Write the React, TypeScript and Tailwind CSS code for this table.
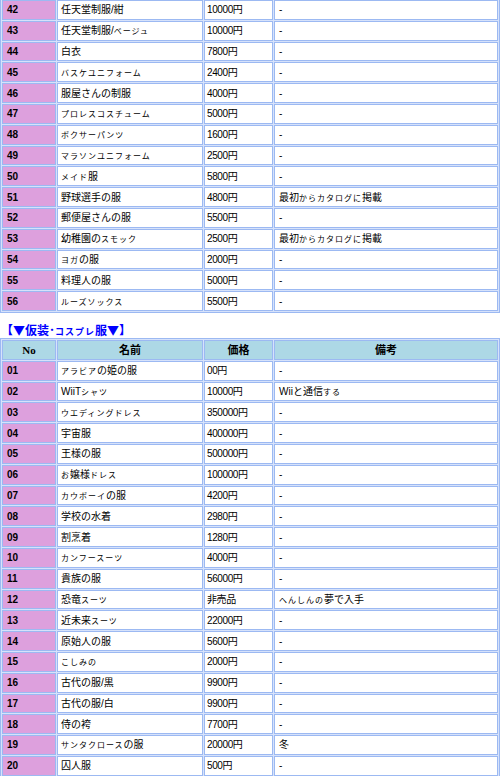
import React from 'react';

type Row = [string, string, string, string];

// 衣装リスト (続き)
const normalClothes: Row[] = [
  ['42', '任天堂制服/紺', '10000円', '-'],
  ['43', '任天堂制服/{ベージュ}', '10000円', '-'],
  ['44', '白衣', '7800円', '-'],
  ['45', '{バスケユニフォーム}', '2400円', '-'],
  ['46', '服屋さんの制服', '4000円', '-'],
  ['47', '{プロレスコスチューム}', '5000円', '-'],
  ['48', '{ボクサーパンツ}', '1600円', '-'],
  ['49', '{マラソンユニフォーム}', '2500円', '-'],
  ['50', '{メイド}服', '5800円', '-'],
  ['51', '野球選手の服', '4800円', '最初{からカタログに}掲載'],
  ['52', '郵便屋さんの服', '5500円', '-'],
  ['53', '幼稚園の{スモック}', '2500円', '最初{からカタログに}掲載'],
  ['54', '{ヨガ}の服', '2000円', '-'],
  ['55', '料理人の服', '5000円', '-'],
  ['56', '{ルーズソックス}', '5500円', '-'],
];

const cosplayClothes: Row[] = [
  ['01', '{アラビア}の姫の服', '00円', '-'],
  ['02', 'WiiT{シャツ}', '10000円', 'Wiiと通信{する}'],
  ['03', '{ウエディングドレス}', '350000円', '-'],
  ['04', '宇宙服', '400000円', '-'],
  ['05', '王様の服', '500000円', '-'],
  ['06', '{お}嬢様{ドレス}', '100000円', '-'],
  ['07', '{カウボーイ}の服', '4200円', '-'],
  ['08', '学校の水着', '2980円', '-'],
  ['09', '割烹着', '1280円', '-'],
  ['10', '{カンフースーツ}', '4000円', '-'],
  ['11', '貴族の服', '56000円', '-'],
  ['12', '恐竜{スーツ}', '非売品', '{へんしんの}夢で入手'],
  ['13', '近未来{スーツ}', '22000円', '-'],
  ['14', '原始人の服', '5600円', '-'],
  ['15', '{こしみの}', '2000円', '-'],
  ['16', '古代の服/黒', '9900円', '-'],
  ['17', '古代の服/白', '9900円', '-'],
  ['18', '侍の袴', '7700円', '-'],
  ['19', '{サンタクロース}の服', '20000円', '冬'],
  ['20', '囚人服', '500円', '-'],
];

// {…} で囲んだ部分は小さい字で表示
function Txt({ s }: { s: string }) {
  const parts = s.split(/(\{[^}]*\})/).filter(Boolean);
  return (
    <>
      {parts.map((p, i) =>
        p.startsWith('{') ? (
          <span key={i} className="text-[8px] tracking-[1px]">
            {p.slice(1, -1)}
          </span>
        ) : (
          <span key={i}>{p}</span>
        )
      )}
    </>
  );
}

const cell = 'h-[19.8px] p-0 border border-[#9cb9f2] align-middle whitespace-nowrap';

function ClothesTable({ rows, header }: { rows: Row[]; header?: boolean }) {
  return (
    <table className="w-[500px] table-fixed border-separate border-spacing-[1px] border border-[#9cb9f2] bg-[#d6e2fb]">
      <colgroup>
        <col className="w-[54px]" />
        <col className="w-[146px]" />
        <col className="w-[69px]" />
        <col />
      </colgroup>
      <tbody>
        {header && (
          <tr>
            <td className={`${cell} bg-[#add8e6] text-center text-[11px] font-bold font-['Liberation_Serif','Noto_Sans_CJK_JP',serif]`}>
              No
            </td>
            <td className={`${cell} bg-[#add8e6] text-center text-[11px] font-bold`}>名前</td>
            <td className={`${cell} bg-[#add8e6] text-center text-[11px] font-bold`}>価格</td>
            <td className={`${cell} bg-[#add8e6] text-center text-[11px] font-bold`}>備考</td>
          </tr>
        )}
        {rows.map(([no, name, price, note]) => (
          <tr key={no}>
            <td className={`${cell} bg-[#dda0dd] pl-[4px] text-[10px] font-bold`}>{no}</td>
            <td className={`${cell} bg-white pl-[3px] text-[10px]`}>
              <Txt s={name} />
            </td>
            <td className={`${cell} bg-white pl-[2px] text-[10px] tracking-[-0.4px]`}>{price}</td>
            <td className={`${cell} bg-white pl-[4px] text-[10px]`}>
              <Txt s={note} />
            </td>
          </tr>
        ))}
      </tbody>
    </table>
  );
}

export default function App() {
  return (
    <div className="w-[500px] h-[776px] overflow-hidden bg-white text-black font-['Liberation_Sans','Noto_Sans_CJK_JP',sans-serif]">
      <div className="-mt-[2px]">
        <ClothesTable rows={normalClothes} />
        <div className="h-[25px] pt-[10px] pl-[1px] text-[12px] leading-[14px] font-bold text-[#0000ff] font-['Noto_Sans_CJK_JP',sans-serif]">
          【▼仮装･<span className="text-[9px] tracking-[1px]">コスプレ</span>服▼】
        </div>
        <ClothesTable rows={cosplayClothes} header />
      </div>
    </div>
  );
}
